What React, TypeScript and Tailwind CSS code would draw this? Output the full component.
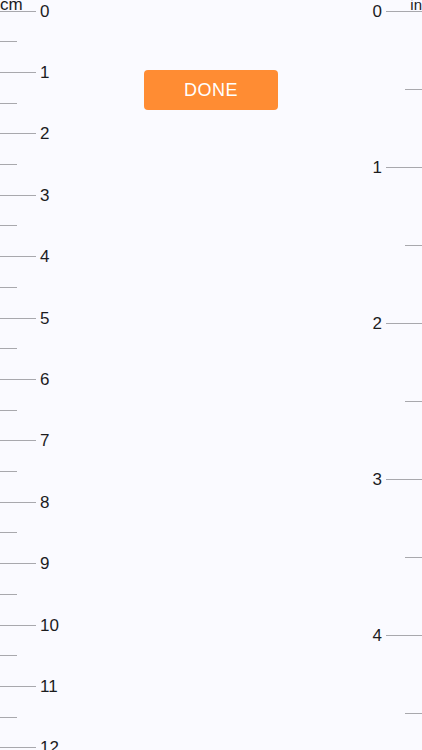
import React from 'react'

const cmMarks = Array.from({ length: 25 }, (_, i) => i)
const inMarks = Array.from({ length: 10 }, (_, i) => i)

function Mark({ major, label, side }: { major: boolean; label: number; side: 'left' | 'right' }) {
  return (
    <div
      className={`flex items-center gap-1 h-[20px] -mt-[10px] ${side === 'right' ? 'flex-row-reverse' : ''}`}
    >
      <div className={`h-px shrink-0 bg-[#a8a8ad] ${major ? 'w-[36px]' : 'w-[17px]'}`} />
      {major && <span className="text-[17px] leading-none">{label}</span>}
    </div>
  )
}

export default function App() {
  return (
    <div
      className="relative w-[422px] h-[750px] overflow-hidden bg-[#fafaff] text-[#1c1c1e]"
      style={{ fontFamily: '"Liberation Sans", Arial, sans-serif' }}
    >
      {/* unit captions */}
      <div className="absolute inset-x-0 top-[-5px] flex justify-between leading-[20px]">
        <span className="text-[17px]">cm</span>
        <span className="text-[15px]">in</span>
      </div>

      <div className="flex h-full">
        {/* cm scale */}
        <div className="w-[70px] flex flex-col pt-[11px]">
          {cmMarks.map((i) => (
            <div key={i} className="h-[30.71px] shrink-0">
              <Mark major={i % 2 === 0} label={i / 2} side="left" />
            </div>
          ))}
        </div>

        {/* centre */}
        <div className="flex-1 flex justify-center items-start pt-[70px]">
          <button className="w-[134px] h-[40px] rounded-[4px] bg-[#ff8c33] text-white text-[18px] font-light tracking-wide">
            DONE
          </button>
        </div>

        {/* inch scale */}
        <div className="w-[70px] flex flex-col pt-[11px]">
          {inMarks.map((i) => (
            <div key={i} className="h-[78px] shrink-0">
              <Mark major={i % 2 === 0} label={i / 2} side="right" />
            </div>
          ))}
        </div>
      </div>
    </div>
  )
}
